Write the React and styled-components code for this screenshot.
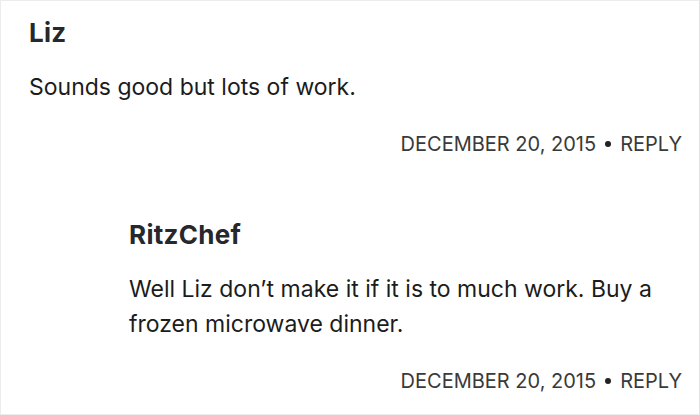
import React from "react";
import styled, { createGlobalStyle } from "styled-components";

const Global = createGlobalStyle`
  html, body { margin: 0; padding: 0; background: #fff; }
  body { font-family: Inter, "Noto Sans", sans-serif; }
`;

const Frame = styled.div`
  box-sizing: border-box;
  width: 700px;
  height: 415px;
  border: 1px solid #ececec;
  border-right-color: #e4e4e4;
  padding: 17px 17px 0 28px;
  overflow: hidden;
`;

const Comment = styled.div`
  margin-left: ${(p) => (p.$depth ? 100 : 0)}px;
  margin-top: ${(p) => (p.$depth ? 64 : 0)}px;
`;

const Author = styled.div`
  font-size: 26px;
  font-weight: 700;
  letter-spacing: 0.3px;
  color: #25282c;
  line-height: 30px;
`;

const Body = styled.p`
  margin: 22px 0 0;
  font-size: 23px;
  line-height: 35px;
  color: #1c1c1c;
`;

const Meta = styled.div`
  display: flex;
  justify-content: flex-end;
  align-items: center;
  gap: 9px;
  margin-top: 27px;
  font-size: 20px;
  line-height: 24px;
  color: #3a3a3a;
  text-transform: uppercase;
`;

const Dot = styled.span`
  width: 6px;
  height: 6px;
  border-radius: 50%;
  background: #222;
`;

const comments = [
  { author: "Liz", text: "Sounds good but lots of work.", date: "December 20, 2015", depth: 0 },
  {
    author: "RitzChef",
    text: "Well Liz don’t make it if it is to much work. Buy a frozen microwave dinner.",
    date: "December 20, 2015",
    depth: 1,
  },
];

export default function App() {
  return (
    <>
      <Global />
      <Frame>
        {comments.map((c) => (
          <Comment key={c.author} $depth={c.depth}>
            <Author>{c.author}</Author>
            <Body>{c.text}</Body>
            <Meta>
              <span>{c.date}</span>
              <Dot />
              <span>Reply</span>
            </Meta>
          </Comment>
        ))}
      </Frame>
    </>
  );
}
